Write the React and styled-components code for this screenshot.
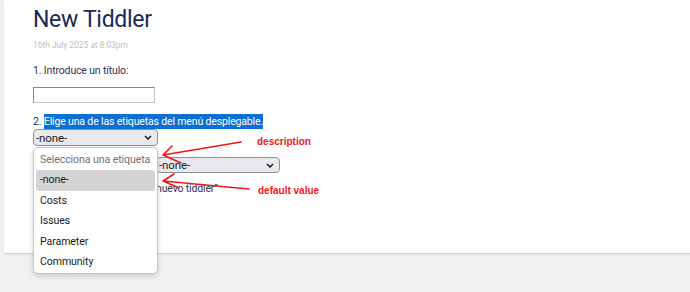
import React from 'react';
import styled, { createGlobalStyle } from 'styled-components';

const GlobalStyle = createGlobalStyle`
  body {
    margin: 0;
    background: #f1f1f1;
    font-family: Roboto, "Noto Sans", sans-serif;
  }
`;

const Page = styled.div`
  width: 690px;
  height: 292px;
  padding-left: 4px;
  box-sizing: border-box;
  overflow: hidden;
`;

const Card = styled.div`
  position: relative;
  height: 253px;
  background: #fff;
  box-sizing: border-box;
  padding: 5px 0 0 29px;
  box-shadow: 0 1px 0 #d6d6d6, 0 2px 3px rgba(0, 0, 0, 0.06);
  color: #333353;
  font-size: 10.5px;
  letter-spacing: -0.15px;
`;

const Title = styled.h1`
  margin: 0;
  font-size: 23px;
  line-height: 30px;
  font-weight: 400;
  letter-spacing: -0.3px;
  color: #182955;
`;

const Subtitle = styled.div`
  margin-top: 3.5px;
  font-size: 8.5px;
  line-height: 13px;
  letter-spacing: -0.05px;
  color: #c0c0c0;
`;

const Para = styled.p`
  margin: ${p => p.$top || 0}px 0 0;
  line-height: ${p => p.$lh || 15}px;
  white-space: nowrap;
`;

const Marked = styled.span`
  background: #0b6fd6;
  color: #fff;
  padding: 1px 0;
`;

const TextInput = styled.div`
  margin-top: 9.5px;
  width: 122px;
  height: 16px;
  box-sizing: border-box;
  border: 1px solid #8a8a8a;
  border-right-color: #c4c4c4;
  border-bottom-color: #c4c4c4;
`;

const Select = styled.div`
  display: flex;
  align-items: center;
  justify-content: space-between;
  margin-top: ${p => p.$top || 0}px;
  width: ${p => p.$w}px;
  height: ${p => p.$h || 17}px;
  box-sizing: border-box;
  padding: 0 5px 0 2px;
  background: #e9e9ed;
  border: 1px solid #8f8f9d;
  border-radius: 4px;
  color: #1b1b1b;
  font-size: 11.5px;
  letter-spacing: -0.1px;
`;

const Row = styled.div`
  display: flex;
  align-items: center;
  margin-top: ${p => p.$top || 0}px;
`;

const HiddenLabel = styled.span`
  display: inline-block;
  width: ${p => p.$w}px;
  white-space: nowrap;
  overflow: hidden;
  vertical-align: top;
`;

const Popup = styled.div`
  position: absolute;
  left: 29px;
  top: 147px;
  width: 125px;
  height: 127px;
  box-sizing: border-box;
  padding: 2px;
  background: #fff;
  border: 1px solid #c9c9c9;
  border-radius: 5px;
  box-shadow: 0 2px 5px rgba(0, 0, 0, 0.18);
  font-size: 10.6px;
  letter-spacing: -0.1px;
  color: #1b1b1b;
  white-space: nowrap;
  overflow: hidden;
`;

const Option = styled.div`
  height: 20.4px;
  line-height: 20.4px;
  padding-left: 4px;
  border-radius: 3px;
  color: ${p => (p.$disabled ? '#707070' : '#1b1b1b')};
  background: ${p => (p.$active ? '#d4d4d4' : 'transparent')};
`;

const Note = styled.span`
  position: absolute;
  left: ${p => p.$x}px;
  top: ${p => p.$y}px;
  color: #f21616;
  font-family: "Liberation Sans", Arial, sans-serif;
  font-weight: 700;
  font-size: 10px;
  letter-spacing: 0;
  white-space: nowrap;
`;

const Arrows = styled.svg`
  position: absolute;
  left: 0;
  top: 0;
  pointer-events: none;
`;

const Chevron = () => (
  <svg width="8" height="5" viewBox="0 0 8 5">
    <path d="M1 1 L4 4 L7 1" fill="none" stroke="#1b1b1b" strokeWidth="1.5" />
  </svg>
);

const options = ['-none-', 'Costs', 'Issues', 'Parameter', 'Community'];

export default function App() {
  return (
    <Page>
      <GlobalStyle />
      <Card>
        <Title>New Tiddler</Title>
        <Subtitle>16th July 2025 at 8:03pm</Subtitle>
        <Para $top={11}>1. Introduce un título:</Para>
        <TextInput />
        <Para $top={13} $lh={12}>2. <Marked>Elige una de las etiquetas del menú desplegable.</Marked></Para>
        <Select $w={125} $top={1}>
          <span>-none-</span>
          <Chevron />
        </Select>
        <Row $top={11}>
          <HiddenLabel $w={123}>Etiqueta seleccionada:</HiddenLabel>
          <Select $w={124} $h={16}>
            <span>-none-</span>
            <Chevron />
          </Select>
        </Row>
        <Para $top={7.5}>
          <HiddenLabel $w={123}>3. Pulsa el botón “</HiddenLabel>
          nuevo tiddler”
        </Para>

        <Popup>
          <Option $disabled>Selecciona una etiqueta</Option>
          {options.map((o, i) => (
            <Option key={o} $active={i === 0}>{o}</Option>
          ))}
        </Popup>

        <Arrows width="686" height="253">
          <g fill="none" stroke="#f21616" strokeWidth="1.6" strokeLinecap="round">
            <path d="M237 142 L159 155 M159 155 L168 146 M159 155 L177 163" />
            <path d="M245 189 L159 181 M159 181 L170 174 M159 181 L175 188" />
          </g>
        </Arrows>
        <Note $x={253} $y={136}>description</Note>
        <Note $x={254} $y={185}>default value</Note>
      </Card>
    </Page>
  );
}
